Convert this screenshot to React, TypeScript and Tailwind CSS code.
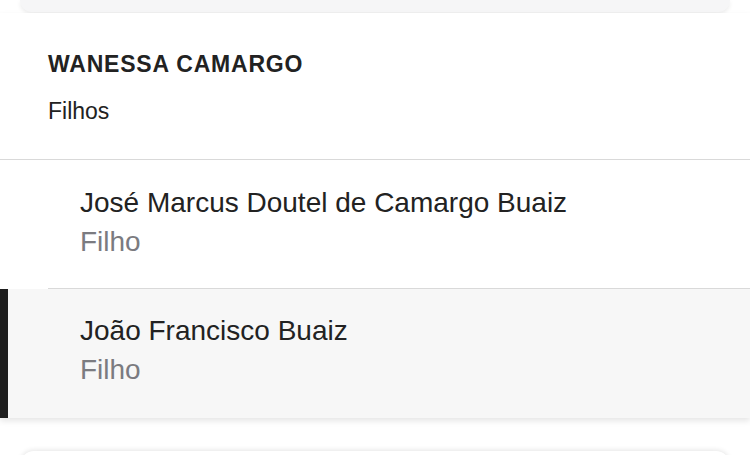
const children = [
  { name: 'José Marcus Doutel de Camargo Buaiz', relation: 'Filho', selected: false },
  { name: 'João Francisco Buaiz', relation: 'Filho', selected: true },
];

export default function App() {
  return (
    <div className="h-screen bg-white font-['Liberation_Sans',Arial,sans-serif] overflow-hidden">
      {/* end of the card above */}
      <div className="mx-[20px] h-[12px] rounded-b-[14px] bg-[#f6f6f7] shadow-[0_2px_4px_rgba(0,0,0,0.08)]" />

      <section className="mt-[1px] bg-white shadow-[0_3px_6px_rgba(0,0,0,0.1)]">
        <div className="pl-[48px] pt-[37px] pb-[35px] border-b border-[#d9d9d9]">
          <h2 className="text-[23px] leading-[28px] font-bold tracking-[0.8px] text-[#222]">WANESSA CAMARGO</h2>
          <p className="mt-[21px] text-[23px] leading-[25px] text-[#222]">Filhos</p>
        </div>

        <ul>
          {children.map((child, i) => (
            <li key={child.name} className={`flex ${child.selected ? 'bg-[#f7f7f7]' : 'bg-white'}`}>
              <div className={`w-[8px] shrink-0 ${child.selected ? 'bg-[#1e1e1e]' : ''}`} />
              <div className={`flex-1 ml-[40px] pl-[32px] ${i === 0 ? 'pt-[26px] pb-[29px] border-b border-[#d9d9d9]' : 'pt-[25px] pb-[31px]'}`}>
                <p className="text-[28px] leading-[34px] text-[#222]">{child.name}</p>
                <p className="mt-[5px] text-[28px] leading-[34px] text-[#7b7b80]">{child.relation}</p>
              </div>
            </li>
          ))}
        </ul>
      </section>

      {/* top of the next card */}
      <div className="mx-[20px] mt-[33px] h-[40px] rounded-t-[14px] bg-white shadow-[0_-1px_5px_rgba(0,0,0,0.1)]" />
    </div>
  );
}
